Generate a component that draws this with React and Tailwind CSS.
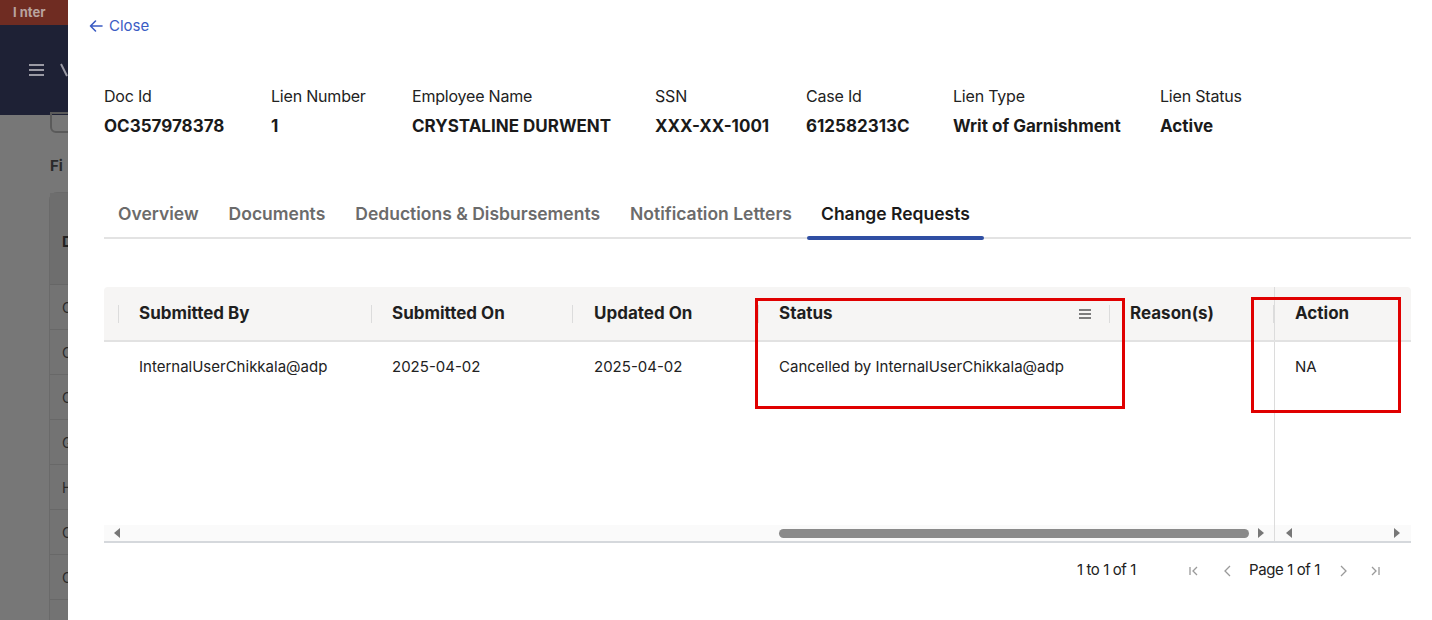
import React from "react";

const font = { fontFamily: "Inter, 'Noto Sans', sans-serif" };

function Field({ label, value, w }) {
  return (
    <div className={`flex flex-col ${w}`}>
      <div className="text-[16px] text-[#222] leading-5 tracking-[-0.2px]">{label}</div>
      <div className="mt-[10px] text-[17px] font-bold text-[#1a1a1a] leading-5">{value}</div>
    </div>
  );
}

function Sep() {
  return <div className="w-px h-[18px] bg-[#dcdcdc]" />;
}

function Tri({ dir }) {
  return (
    <svg width="8" height="10" viewBox="0 0 8 10">
      {dir === "left" ? <path d="M7 0 L1 5 L7 10Z" fill="#777" /> : <path d="M1 0 L7 5 L1 10Z" fill="#777" />}
    </svg>
  );
}

export default function App() {
  return (
    <div className="relative w-[1432px] h-[620px] overflow-hidden bg-white flex" style={font}>
      {/* background app strip */}
      <div className="w-[68px] shrink-0 flex flex-col bg-[#777777] overflow-hidden">
        <div className="h-[25px] bg-[#6f2c22] text-[#b9a39f] text-[13px] font-bold pl-[13px] pt-[3px] whitespace-nowrap">I nter</div>
        <div className="h-[90px] bg-[#1e2135] flex items-center pl-[29px] gap-[10px]">
          <svg width="15" height="12" viewBox="0 0 15 12"><path d="M0 1h15M0 6h15M0 11h15" stroke="#9a9aa4" strokeWidth="2" /></svg>
          <svg width="14" height="14" viewBox="0 0 14 14"><path d="M7 1 L13 13" stroke="#9a9aa4" strokeWidth="2" /></svg>
        </div>
        <div className="relative flex-1">
          <div className="absolute left-[50px] -top-[3px] w-[30px] h-[21px] border-2 border-[#5a5a5a] rounded-b-[6px]" />
          <div className="absolute left-[50px] top-[40px] text-[15px] font-bold text-[#2a2a2a]">Fi</div>
          <div className="absolute left-[49px] top-[77px] w-[40px] h-[520px] border border-[#6a6a6a] rounded-tl-[8px] bg-[#737373]">
            <div className="h-[92px] bg-[#6e6e6e] border-b border-[#666] pl-[12px] pt-[38px] text-[15px] font-bold text-[#222]">D</div>
            {["C", "C", "C", "G", "H", "C", "C"].map((c, i) => (
              <div key={i} className="h-[45px] border-b border-[#686868] pl-[12px] flex items-center text-[14px] text-[#2a2a2a]">{c}</div>
            ))}
          </div>
        </div>
      </div>

      {/* panel */}
      <div className="flex-1 flex flex-col pl-[36px] pr-[21px]">
        <div className="h-[52px] flex items-center gap-[6px] -ml-[15px] text-[#3b5cc4] text-[15px]">
          <svg width="14" height="14" viewBox="0 0 14 14" fill="none" stroke="#3b5cc4" strokeWidth="1.6" strokeLinecap="round" strokeLinejoin="round"><path d="M13 7H1.5M6.5 2 1.5 7l5 5" /></svg>
          <span>Close</span>
        </div>

        <div className="flex mt-[34px]">
          <Field w="w-[167px]" label="Doc Id" value="OC357978378" />
          <Field w="w-[141px]" label="Lien Number" value="1" />
          <Field w="w-[243px]" label="Employee Name" value="CRYSTALINE DURWENT" />
          <Field w="w-[151px]" label="SSN" value="XXX-XX-1001" />
          <Field w="w-[147px]" label="Case Id" value="612582313C" />
          <Field w="w-[207px]" label="Lien Type" value="Writ of Garnishment" />
          <Field w="w-[120px]" label="Lien Status" value="Active" />
        </div>

        {/* tabs */}
        <div className="mt-[65px] flex gap-[30px] border-b-2 border-[#e3e3e3] h-[38px] pl-[14px] text-[17.5px] font-semibold">
          {["Overview", "Documents", "Deductions & Disbursements", "Notification Letters"].map((t) => (
            <div key={t} className="text-[#6b6b6b] leading-5 pt-[3px] whitespace-nowrap">{t}</div>
          ))}
          <div className="relative -ml-[15px] px-[14px] text-[#1a1a1a] leading-5 pt-[3px] whitespace-nowrap">
            Change Requests
            <div className="absolute left-0 right-0 -bottom-[3px] h-[4px] rounded-full bg-[#2f4ea3]" />
          </div>
        </div>

        {/* grid */}
        <div className="mt-[48px] relative flex flex-col">
          <div className="flex h-[55px] bg-[#f6f5f4] border-b-2 border-[#e2e2e2] rounded-t-[4px] text-[17px] font-bold text-[#1f1f1f]">
            <div className="w-[15px] flex items-center justify-end"><Sep /></div>
            <div className="w-[253px] pl-[20px] flex items-center justify-between">Submitted By<Sep /></div>
            <div className="w-[201px] pl-[20px] flex items-center justify-between">Submitted On<Sep /></div>
            <div className="w-[186px] pl-[21px] flex items-center justify-between">Updated On<Sep /></div>
            <div className="w-[351px] pl-[20px] flex items-center">
              <span className="flex-1">Status</span>
              <svg width="12" height="10" viewBox="0 0 12 10" className="mr-[18px]"><path d="M0 1h12M0 5h12M0 9h12" stroke="#555" strokeWidth="1.4" /></svg>
              <Sep />
            </div>
            <div className="w-[164px] pl-[20px] flex items-center justify-between">Reason(s)<Sep /></div>
            <div className="flex-1 border-l border-[#dcdcdc] pl-[20px] flex items-center">Action</div>
          </div>
          <div className="flex h-[183px] text-[15px] text-[#222]">
            <div className="w-[15px]" />
            <div className="w-[253px] pl-[20px] pt-[14px]">InternalUserChikkala@adp</div>
            <div className="w-[201px] pl-[20px] pt-[14px]">2025-04-02</div>
            <div className="w-[186px] pl-[21px] pt-[14px]">2025-04-02</div>
            <div className="w-[351px] pl-[20px] pt-[14px]">Cancelled by InternalUserChikkala@adp</div>
            <div className="w-[164px]" />
            <div className="flex-1 border-l border-[#dcdcdc] pl-[20px] pt-[14px]">NA</div>
          </div>
          {/* scrollbar */}
          <div className="flex h-[18px] bg-[#fafafa] border-b-2 border-[#d5d8dc]">
            <div className="w-[1170px] flex items-center px-[9px]">
              <Tri dir="left" />
              <div className="flex-1 relative h-[9px]">
                <div className="absolute left-[658px] right-[8px] top-0 h-[9px] rounded-full bg-[#8a8a8a]" />
              </div>
              <Tri dir="right" />
            </div>
            <div className="flex-1 border-l border-[#dcdcdc] flex items-center justify-between px-[10px]">
              <Tri dir="left" />
              <Tri dir="right" />
            </div>
          </div>

          {/* annotation boxes */}
          <div className="absolute left-[651px] top-[11px] w-[370px] h-[111px] border-[3px] border-[#e00000]" />
          <div className="absolute left-[1147px] top-[10px] w-[150px] h-[116px] border-[3px] border-[#e00000]" />
        </div>

        {/* pagination */}
        <div className="flex items-center justify-end h-[55px] pr-[29px] text-[15px] text-[#222] tracking-[-0.4px]">
          <span>1 to 1 of 1</span>
          <svg width="14" height="14" viewBox="0 0 14 14" fill="none" stroke="#9a9a9a" strokeWidth="1.3" className="ml-[51px]"><path d="M3 3v8M10 3 6 7l4 4" /></svg>
          <svg width="14" height="14" viewBox="0 0 14 14" fill="none" stroke="#9a9a9a" strokeWidth="1.3" className="ml-[20px]"><path d="M9 2 4 7l5 5" /></svg>
          <span className="ml-[14px]">Page 1 of 1</span>
          <svg width="14" height="14" viewBox="0 0 14 14" fill="none" stroke="#9a9a9a" strokeWidth="1.3" className="ml-[16px]"><path d="M5 2l5 5-5 5" /></svg>
          <svg width="14" height="14" viewBox="0 0 14 14" fill="none" stroke="#9a9a9a" strokeWidth="1.3" className="ml-[18px]"><path d="M4 3l4 4-4 4M11 3v8" /></svg>
        </div>
      </div>
    </div>
  );
}
